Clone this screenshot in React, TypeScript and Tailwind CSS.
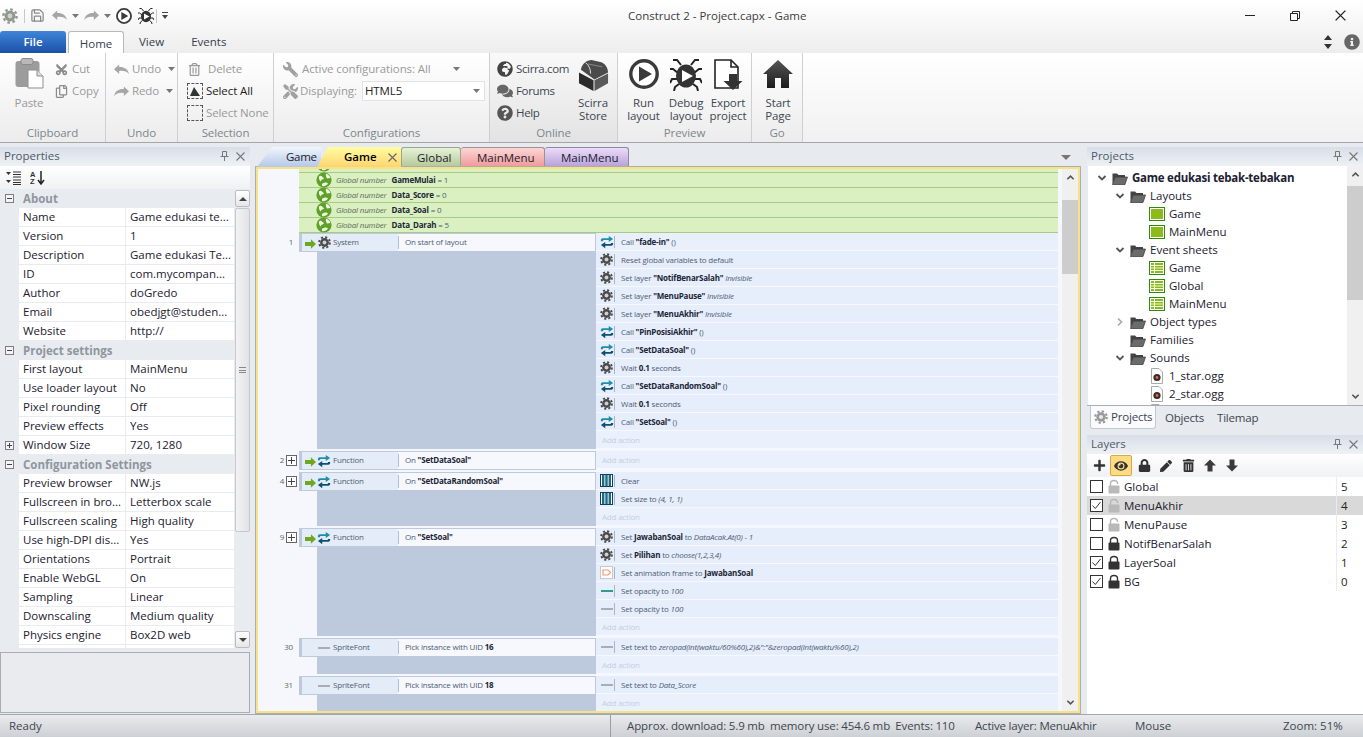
import type { ReactNode } from 'react'
import { FaTools, FaWrench, FaComments, FaQuestionCircle, FaInfoCircle, FaGlobeAfrica, FaRegTrashAlt, FaPlus, FaEye, FaLock, FaPen, FaTrashAlt, FaRegCopy, FaCut } from 'react-icons/fa'
import { LuSave } from 'react-icons/lu'

// ---- small drawings ----
function Gear({ s = 14, c = '#4a4a4a', mid = '#cfcfcf' }: { s?: number; c?: string; mid?: string }) {
  return (
    <svg width={s} height={s} viewBox="0 0 16 16" className="shrink-0">
      <circle cx="8" cy="8" r="6.6" fill="none" stroke={c} strokeWidth="2.4" strokeDasharray="2.6 2.58" />
      <circle cx="8" cy="8" r="5.4" fill={c} />
      <circle cx="8" cy="8" r="2.4" fill={mid} />
    </svg>
  )
}
function Fn() {
  return (
    <svg width="14" height="14" viewBox="0 0 16 16" className="shrink-0">
      <path d="M1 7V5.6C1 4.4 2 3.6 3 3.6H10V1L15 4.6 10 8V5.8H3.6V7Z" fill="#1f8fa8" />
      <path d="M15 9V10.4C15 11.6 14 12.4 13 12.4H6V15L1 11.4 6 8V10.2H12.4V9Z" fill="#0f4f72" />
    </svg>
  )
}
function GreenArrow() {
  return (
    <svg width="11" height="10" viewBox="0 0 13 11" className="shrink-0 mt-[5px] ml-[1px]">
      <path d="M0 3.2H7V0L13 5.5 7 11V7.8H0Z" fill="#6ea820" />
    </svg>
  )
}
function Globe() {
  return (
    <svg width="16" height="16" viewBox="0 0 16 16" className="shrink-0">
      <circle cx="8" cy="8" r="7.6" fill="#5fa02a" />
      <path d="M3 4.5C5 2.5 6.5 5 8 6.5 6.5 8 5 7 5 9.5 3.5 9 2.5 6.5 3 4.5ZM10 1.5C12 2 14 4 14.5 6L11 6.5C10 5 9.5 3 10 1.5ZM6 12C8 10.5 10.5 10 12 11.5 10.5 14 8 14.5 6 14Z" fill="#eef6e0" />
    </svg>
  )
}
function ArrayIcon() {
  return (
    <svg width="13" height="13" viewBox="0 0 13 13" className="shrink-0">
      <rect x="0.5" y="0.5" width="12" height="12" fill="#fff" stroke="#123f5a" />
      <path d="M2 1H4.4V12H2ZM5.3 1H7.7V12H5.3ZM8.6 1H11V12H8.6Z" fill="#1c6a85" />
    </svg>
  )
}
function AnimIcon() {
  return (
    <svg width="13" height="13" viewBox="0 0 13 13" className="shrink-0">
      <rect x="0.5" y="0.5" width="12" height="12" fill="#fff" stroke="#c9c9c9" />
      <path d="M3 4H8L10.5 6.5 8 9H3Z" fill="none" stroke="#ee9a70" strokeWidth="1.2" />
    </svg>
  )
}
function Dash({ c = '#a9aeb6' }: { c?: string }) {
  return <div className="w-[12px] h-[2px] shrink-0" style={{ backgroundColor: c }} />
}
function Chevron({ up, c = '#555', s = 9 }: { up?: boolean; c?: string; s?: number }) {
  return (
    <svg width={s} height={s} viewBox="0 0 10 10" className="shrink-0">
      <path d={up ? 'M1.5 7L5 3.5 8.5 7' : 'M1.5 3L5 6.5 8.5 3'} fill="none" stroke={c} strokeWidth="1.8" />
    </svg>
  )
}
function Caret({ c = '#777' }: { c?: string }) {
  return (
    <svg width="7" height="4" viewBox="0 0 7 4" className="shrink-0">
      <path d="M0 0H7L3.5 4Z" fill={c} />
    </svg>
  )
}
function UndoArrow({ flip, w = 15 }: { flip?: boolean; w?: number }) {
  return (
    <svg width={w} height={w * 0.7} viewBox="0 0 16 11" className={flip ? 'shrink-0 -scale-x-100' : 'shrink-0'}>
      <path d="M0 5.5L5.5 0.5V3.2C10.5 2.8 14.5 5 16 10.5 13.5 7.8 10 6.8 5.5 7.4V10.5Z" fill="#a6a6a6" />
    </svg>
  )
}
function PlayCircle({ s = 30 }: { s?: number }) {
  return (
    <svg width={s} height={s} viewBox="0 0 30 30" className="shrink-0">
      <circle cx="15" cy="15" r="13.2" fill="#fff" stroke="#3a3a3a" strokeWidth="3.4" />
      <path d="M10 7.5L23 15 10 22.5Z" fill="#3a3a3a" />
    </svg>
  )
}
function Bug({ s = 32 }: { s?: number }) {
  return (
    <svg width={s} height={s} viewBox="0 0 32 32" className="shrink-0">
      <g stroke="#222" strokeWidth="2" fill="none">
        <path d="M11 6L7 1H3M21 6L25 1H29M8 14L3 10H0M24 14L29 10H32M8 20L2 20 0 24M24 20L30 20 32 24M9 25L5 28 4 32M23 25L27 28 28 32" />
      </g>
      <ellipse cx="16" cy="17" rx="10" ry="11.5" fill="#333" />
      <path d="M12 11L23 17 12 23Z" fill="#fff" />
    </svg>
  )
}
function ExportIcon() {
  return (
    <svg width="30" height="32" viewBox="0 0 30 32" className="shrink-0">
      <path d="M2 1H18L25 8V29H2Z" fill="#fff" stroke="#222" strokeWidth="1.6" />
      <path d="M18 1V8H25" fill="none" stroke="#222" strokeWidth="1.6" />
      <path d="M16 15H24V22H29.5L20 31 10.5 22H16Z" fill="#333" />
    </svg>
  )
}
function House() {
  return (
    <svg width="30" height="30" viewBox="0 0 30 30" className="shrink-0">
      <defs>
        <linearGradient id="hs" x1="0" y1="0" x2="0" y2="1">
          <stop offset="0" stopColor="#555" />
          <stop offset="1" stopColor="#1c1c1c" />
        </linearGradient>
      </defs>
      <path d="M15 1L30 15H26V29H18V19H12V29H4V15H0Z" fill="url(#hs)" />
    </svg>
  )
}
function Chest() {
  return (
    <svg width="31" height="33" viewBox="0 0 32 34" className="shrink-0">
      <path d="M3 11C4 5 9 1 14 1L23 3C28 4 31 9 31 14L17 21Z" fill="#4b4b4b" />
      <path d="M8 4C11 6 13 10 13 15" stroke="#ddd" strokeWidth="1" fill="none" />
      <path d="M10 5L25 8" stroke="#8a8a8a" strokeWidth="1" />
      <path d="M1 14L16 22V33L1 25Z" fill="#2c2c2c" />
      <path d="M17 22L31 15V25L17 33Z" fill="#595959" />
    </svg>
  )
}
function Paste() {
  return (
    <svg width="29" height="31" viewBox="0 0 29 31" className="shrink-0">
      <rect x="0.5" y="3" width="24" height="26" rx="3" fill="#9c9c9c" />
      <rect x="6" y="0.5" width="12" height="6" rx="2" fill="#b9b9b9" stroke="#8a8a8a" />
      <path d="M13 12H22L28 18V30H13Z" fill="#fff" stroke="#8f8f8f" />
      <path d="M22 12V18H28" fill="#ddd" stroke="#8f8f8f" />
    </svg>
  )
}
function Pin({ c = '#777' }: { c?: string }) {
  return (
    <svg width="9" height="10" viewBox="0 0 9 10" className="shrink-0">
      <path d="M2.5 0.5H6.5V5.5H2.5ZM0.5 5.5H8.5M4.5 5.5V10" fill="none" stroke={c} />
    </svg>
  )
}
function CloseX({ c = '#777', s = 9 }: { c?: string; s?: number }) {
  return (
    <svg width={s} height={s} viewBox="0 0 9 9" className="shrink-0">
      <path d="M0.5 0.5L8.5 8.5M8.5 0.5L0.5 8.5" stroke={c} strokeWidth="1.1" />
    </svg>
  )
}
function Folder() {
  return (
    <svg width="16" height="13" viewBox="0 0 16 13" className="shrink-0">
      <path d="M0.5 12V1.5H5L6.5 3H13V5H3.5Z" fill="#444" />
      <path d="M0.5 12.5L3.5 5H15.5L13 12.5Z" fill="#6b6b6b" stroke="#333" strokeWidth="0.7" />
    </svg>
  )
}
function LayoutIcon() {
  return (
    <svg width="16" height="14" viewBox="0 0 16 14" className="shrink-0">
      <rect x="0.5" y="0.5" width="15" height="13" fill="#fff" stroke="#2f8a12" />
      <rect x="2" y="2" width="12" height="10" fill="#8cbb18" />
    </svg>
  )
}
function SheetIcon() {
  return (
    <svg width="16" height="14" viewBox="0 0 16 14" className="shrink-0">
      <rect x="0.5" y="0.5" width="15" height="13" fill="#fff" stroke="#2f8a12" />
      <path d="M2 2H14V12H2Z" fill="#8cbb18" />
      <path d="M2 4.5H14M2 7H14M2 9.5H14M5.5 2V12" stroke="#fff" strokeWidth="0.9" />
    </svg>
  )
}
function SoundIcon() {
  return (
    <svg width="12" height="16" viewBox="0 0 12 16" className="shrink-0">
      <path d="M0.5 0.5H8L11.5 4V15.5H0.5Z" fill="#fff" stroke="#aaa" />
      <circle cx="6" cy="9.5" r="3.6" fill="#3a2b2b" />
      <circle cx="6" cy="9.5" r="1.4" fill="#e86a3a" />
    </svg>
  )
}
function BlockArrow({ down }: { down?: boolean }) {
  return (
    <svg width="12" height="13" viewBox="0 0 12 13" className={down ? 'rotate-180' : ''}>
      <path d="M6 0.5L12 6.5H8.5V12.5H3.5V6.5H0Z" fill="#3a3a3a" />
    </svg>
  )
}
function DashedBox({ children }: { children?: ReactNode }) {
  return (
    <div className="w-[16px] h-[16px] border border-dashed border-[#555] flex items-center justify-center shrink-0">
      {children}
    </div>
  )
}

// ---- ribbon ----
function Group({ w, label, dark, children }: { w: string; label: string; dark?: boolean; children: ReactNode }) {
  return (
    <div className={`${w} shrink-0 flex flex-col border-r border-[#cfcfcf] bg-linear-to-b ${dark ? 'from-[#f9f9f9] to-[#e3e3e3]' : 'from-white to-[#ececec]'}`}>
      <div className="h-[71px] flex pt-[5px]">{children}</div>
      <div className="h-[18px] text-center text-[#7c8791] leading-[18px]">{label}</div>
    </div>
  )
}
function Small({ icon, label, dim = true, caret, className = '' }: { icon?: ReactNode; label: string; dim?: boolean; caret?: boolean; className?: string }) {
  return (
    <div className={`h-[22px] flex items-center gap-[3px] whitespace-nowrap ${dim ? 'text-[#9a9a9a]' : 'text-[#222]'} ${className}`}>
      {icon}
      <span>{label}</span>
      {caret && <span className="ml-[4px] flex"><Caret /></span>}
    </div>
  )
}
function Large({ w, icon, l1, l2 }: { w: string; icon: ReactNode; l1: string; l2: string }) {
  return (
    <div className={`${w} shrink-0 flex flex-col items-center`}>
      <div className="h-[38px] flex items-start justify-center pt-[1px]">{icon}</div>
      <div className="text-center leading-[13px] text-[#3d4650]">{l1}<br />{l2}</div>
    </div>
  )
}

function Ribbon() {
  return (
    <div className="h-[90px] shrink-0 flex border-b border-[#a6a6a6] bg-linear-to-b from-white to-[#f1f1f1] tracking-[-0.1px]">
      <Group w="w-[106px]" label="Clipboard">
        <div className="w-[55px] flex flex-col items-center shrink-0 pl-[3px]">
          <div className="h-[36px]"><Paste /></div>
          <div className="text-[#9a9a9a]">Paste</div>
        </div>
        <div className="flex flex-col">
          <Small icon={<FaCut size={13} color="#8b8b8b" className="-rotate-90 mr-[1px]" />} label="Cut" />
          <Small icon={<FaRegCopy size={13} color="#8b8b8b" className="mr-[1px]" />} label="Copy" />
        </div>
      </Group>
      <Group w="w-[72px]" label="Undo">
        <div className="flex flex-col pl-[8px]">
          <Small icon={<UndoArrow />} label="Undo" caret />
          <Small icon={<UndoArrow flip />} label="Redo" caret />
        </div>
      </Group>
      <Group w="w-[96px]" label="Selection">
        <div className="flex flex-col pl-[9px]">
          <Small icon={<FaRegTrashAlt size={13} color="#9a9a9a" className="mx-[1px] mr-[4px]" />} label="Delete" />
          <Small dim={false} icon={<DashedBox><svg width="12" height="12" viewBox="0 0 12 12"><path d="M1 11L5 2 11 11Z" fill="#333" /></svg></DashedBox>} label="Select All" />
          <Small icon={<DashedBox />} label="Select None" />
        </div>
      </Group>
      <Group w="w-[216px]" label="Configurations">
        <div className="flex flex-col pl-[9px]">
          <div className="h-[22px] flex items-center text-[#9a9a9a] whitespace-nowrap">
            <FaWrench size={15} color="#a0a0a0" className="mr-[4px] -scale-x-100" />
            <span>Active configurations: All</span>
            <span className="ml-[22px] flex"><Caret /></span>
          </div>
          <div className="h-[22px] flex items-center text-[#9a9a9a] whitespace-nowrap">
            <FaTools size={15} color="#a0a0a0" className="mr-[2px]" />
            <span>Displaying:</span>
            <div className="ml-[5px] w-[123px] h-[20px] border border-[#dfe3e8] bg-white text-[#222] flex items-center justify-between pl-[2px] pr-[4px]">
              HTML5 <Caret />
            </div>
          </div>
        </div>
      </Group>
      <Group w="w-[128px]" label="Online" dark>
        <div className="flex flex-col pl-[7px] w-[87px] shrink-0 tracking-[-0.35px]">
          <Small dim={false} className="text-[#3d4650]!" icon={<FaGlobeAfrica size={16} color="#444" />} label="Scirra.com" />
          <Small dim={false} className="text-[#3d4650]!" icon={<FaComments size={16} color="#666" />} label="Forums" />
          <Small dim={false} className="text-[#3d4650]!" icon={<FaQuestionCircle size={16} color="#555" />} label="Help" />
        </div>
        <Large w="w-[32px]" icon={<Chest />} l1="Scirra" l2="Store" />
      </Group>
      <Group w="w-[134px]" label="Preview">
        <div className="flex pl-[4px]">
          <Large w="w-[43px]" icon={<PlayCircle />} l1="Run" l2="layout" />
          <Large w="w-[42px]" icon={<Bug />} l1="Debug" l2="layout" />
          <Large w="w-[42px]" icon={<ExportIcon />} l1="Export" l2="project" />
        </div>
      </Group>
      <Group w="w-[51px]" label="Go">
        <div className="pl-[1px]"><Large w="w-[50px]" icon={<House />} l1="Start" l2="Page" /></div>
      </Group>
    </div>
  )
}

// ---- panels ----
function PanelHead({ title }: { title: string }) {
  return (
    <div className="h-[19px] shrink-0 flex items-center justify-between pl-[4px] pr-[5px] pb-px bg-linear-to-b from-[#d8dfe9] to-[#eef1f5] text-[#4f5a66]">
      <span>{title}</span>
      <span className="flex items-center gap-[7px]"><Pin /><CloseX /></span>
    </div>
  )
}

const PROP_SECTIONS: { title: string; rows: [string, string, boolean?][] }[] = [
  { title: 'About', rows: [['Name', 'Game edukasi te...'], ['Version', '1'], ['Description', 'Game edukasi Te...'], ['ID', 'com.mycompan...'], ['Author', 'doGredo'], ['Email', 'obedjgt@studen...'], ['Website', 'http://']] },
  { title: 'Project settings', rows: [['First layout', 'MainMenu'], ['Use loader layout', 'No'], ['Pixel rounding', 'Off'], ['Preview effects', 'Yes'], ['Window Size', '720, 1280', true]] },
  { title: 'Configuration Settings', rows: [['Preview browser', 'NW.js'], ['Fullscreen in bro...', 'Letterbox scale'], ['Fullscreen scaling', 'High quality'], ['Use high-DPI dis...', 'Yes'], ['Orientations', 'Portrait'], ['Enable WebGL', 'On'], ['Sampling', 'Linear'], ['Downscaling', 'Medium quality'], ['Physics engine', 'Box2D web']] },
]

function MiniBox({ plus }: { plus?: boolean }) {
  return (
    <svg width="9" height="9" viewBox="0 0 9 9" className="shrink-0">
      <rect x="0.5" y="0.5" width="8" height="8" fill="#f2f4f7" stroke="#7d7d7d" />
      <path d={plus ? 'M2 4.5H7M4.5 2V7' : 'M2 4.5H7'} stroke="#444" />
    </svg>
  )
}

function Properties() {
  return (
    <div className="w-[250px] shrink-0 flex flex-col">
      <PanelHead title="Properties" />
      <div className="h-[23px] shrink-0 bg-linear-to-b from-white to-[#eff1f3] flex items-center gap-[9px] pl-[6px]">
        <svg width="15" height="14" viewBox="0 0 15 14">
          <path d="M0 1H5L2.5 4ZM0 9H5L2.5 12Z" fill="#333" />
          <path d="M7 1H15M7 3.5H15M7 6H15M7 9H15M7 11.5H15M7 13.5H15" stroke="#333" />
        </svg>
        <svg width="15" height="15" viewBox="0 0 15 15">
          <text x="0" y="6.5" fontSize="7.5" fontWeight="700" fill="#333" fontFamily="Liberation Sans">A</text>
          <text x="0" y="14" fontSize="7.5" fontWeight="700" fill="#333" fontFamily="Liberation Sans">Z</text>
          <path d="M11 1V13M8 10L11 14 14 10" fill="none" stroke="#222" strokeWidth="1.5" />
        </svg>
      </div>
      <div className="h-[459px] shrink-0 flex bg-[#e8ebf0]">
        <div className="w-[234px] shrink-0 overflow-hidden">
          {PROP_SECTIONS.map(sec => (
            <div key={sec.title}>
              <div className="h-[19px] flex items-center pl-[5px] font-bold text-[#8f969e]">
                <MiniBox />
                <span className="ml-[9px]">{sec.title}</span>
              </div>
              {sec.rows.map(([k, v, plus]) => (
                <div key={k} className="h-[19px] flex border-b border-[#e8ebf0]">
                  <div className="w-[19px] shrink-0 flex items-center pl-[5px]">{plus && <MiniBox plus />}</div>
                  <div className="w-[107px] shrink-0 bg-white pl-[4px] leading-[18px] border-r border-[#e8ebf0] whitespace-nowrap overflow-hidden">{k}</div>
                  <div className="flex-1 bg-white pl-[4px] leading-[18px] whitespace-nowrap overflow-hidden">{v}</div>
                </div>
              ))}
            </div>
          ))}
          <div className="h-[3px] flex">
            <div className="w-[19px]" />
            <div className="w-[107px] bg-white border-r border-[#e8ebf0]" />
            <div className="flex-1 bg-white" />
          </div>
        </div>
        <div className="w-[15px] ml-[1px] flex flex-col pt-[1px]">
          <div className="h-[17px] shrink-0 rounded-[2px] border border-[#b9bdc3] bg-linear-to-b from-white to-[#e6e6e6] flex items-center justify-center">
            <svg width="8" height="4" viewBox="0 0 8 4"><path d="M0 4H8L4 0Z" fill="#444" /></svg>
          </div>
          <div className="h-[324px] shrink-0 mt-[1px] rounded-[2px] border border-[#c5c8cd] bg-linear-to-r from-[#f3f3f3] to-[#e1e3e6] flex items-center justify-center">
            <div className="w-[7px] h-[6px] border-y border-[#888] flex items-center"><div className="w-full h-px bg-[#888]" /></div>
          </div>
          <div className="flex-1" />
          <div className="h-[17px] shrink-0 rounded-[2px] border border-[#b9bdc3] bg-linear-to-b from-white to-[#e6e6e6] flex items-center justify-center">
            <svg width="8" height="4" viewBox="0 0 8 4"><path d="M0 0H8L4 4Z" fill="#444" /></svg>
          </div>
        </div>
      </div>
      <div className="h-[61px] mt-[4px] shrink-0 border border-[#a8adb4] bg-[#e9ebef]" />
    </div>
  )
}

// ---- event sheet ----
const B = ({ children }: { children: ReactNode }) => <b className="font-bold text-[#1c2636]">{children}</b>
const I = ({ children }: { children: ReactNode }) => <i className="italic">{children}</i>

type Action = { icon?: ReactNode; text: ReactNode; add?: boolean; lit?: boolean }
const ADD: Action = { text: 'Add action', add: true }
const gear = <Gear s={13} />
const fn = <Fn />
const dash = <Dash />

function ActionRow({ a }: { a: Action }) {
  if (a.add) {
    return <div className="h-[18px] bg-[#eaf0fc] border-b border-[#f5f8fe] flex items-center pl-[6px] text-[#c6cfdf]">Add action</div>
  }
  return (
    <div className={`h-[18px] flex items-center border-b border-[#f5f8fe] pl-[4px] ${a.lit ? 'bg-[#e9f0fc]' : 'bg-[#e6edfb]'}`}>
      <div className="w-[13px] flex items-center justify-center shrink-0">{a.icon}</div>
      <div className="w-px h-[12px] bg-[#aab5c6] ml-[1px] mr-[6px] shrink-0" />
      <div className="whitespace-nowrap">{a.text}</div>
    </div>
  )
}

function EventBlock({ num, plus, icons, arrow = true, obj, cond, actions, mt = 'mt-[2px]' }: { num: string; plus?: boolean; icons: ReactNode; arrow?: boolean; obj: string; cond: ReactNode; actions: Action[]; mt?: string }) {
  return (
    <div className={`flex ${mt}`} >
      <div className={`w-[41px] shrink-0 h-[18px] flex items-center justify-end text-[#666] ${plus ? 'pr-[2px]' : 'pr-[6px]'}`}>
        {num}
        {plus && (
          <svg width="11" height="11" viewBox="0 0 11 11" className="ml-[2px]">
            <rect x="0.5" y="0.5" width="10" height="10" fill="#fff" stroke="#666" />
            <path d="M2 5.5H9M5.5 2V9" stroke="#444" />
          </svg>
        )}
      </div>
      <div className="w-[297px] shrink-0 flex flex-col">
        <div className="h-[19px] -mb-px flex shrink-0 border border-l-[3px] border-[#bdcadd] bg-[#f6f8fe]">
          <div className="w-[96px] shrink-0 bg-[#e4ecf7] flex items-center pl-[2px] gap-[1px]">
            <span className="w-[12px] flex shrink-0 -mt-[3px]">{arrow && <GreenArrow />}</span>
            <span className="w-[14px] flex items-center justify-center shrink-0">{icons}</span>
            <span className="ml-[1px] -mt-px">{obj}</span>
          </div>
          <div className="flex-1 border-l border-[#b3c0d3] my-[2px] pl-[6px] flex items-center whitespace-nowrap">
            <span className="-mt-px">{cond}</span>
          </div>
        </div>
        <div className="flex-1 ml-[18px] bg-[#bdcadd]" />
      </div>
      <div className="w-[462px] shrink-0">
        {actions.map((a, i) => <ActionRow key={i} a={a} />)}
      </div>
    </div>
  )
}

const GLOBALS: [string, string][] = [['GameMulai', '1'], ['Data_Score', '0'], ['Data_Soal', '0'], ['Data_Darah', '5']]

function EventSheet() {
  return (
    <div className="flex-1 min-w-0 overflow-hidden bg-[#f5f7fc] text-[8px] tracking-[-0.2px] text-[#4f5d73] leading-none">
      <div className="h-[4px] ml-[41px] w-[759px] bg-[#daf0c0] border-b border-[#a9c98c] overflow-hidden flex items-end pl-[17px]">
        <span className="flex"><Globe /></span>
      </div>
      {GLOBALS.map(([n, v]) => (
        <div key={n} className="h-[15px] ml-[41px] w-[759px] bg-[#daf0c0] border-b border-[#a9c98c] flex items-center pl-[17px]">
          <Globe />
          <span className="ml-[4px] whitespace-nowrap">
            <span className="italic text-[#5c6b5c] mr-[5px]">Global number</span>
            <B>{n}</B> = {v}
          </span>
        </div>
      ))}
      <EventBlock
        mt="mt-0" num="1" icons={<Gear s={13} />} obj="System" cond="On start of layout"
        actions={[
          { icon: fn, text: <>Call <B>"fade-in"</B> ()</>, lit: true },
          { icon: gear, text: 'Reset global variables to default' },
          { icon: gear, text: <>Set layer <B>"NotifBenarSalah"</B> <I>Invisible</I></> },
          { icon: gear, text: <>Set layer <B>"MenuPause"</B> <I>Invisible</I></> },
          { icon: gear, text: <>Set layer <B>"MenuAkhir"</B> <I>Invisible</I></> },
          { icon: fn, text: <>Call <B>"PinPosisiAkhir"</B> ()</> },
          { icon: fn, text: <>Call <B>"SetDataSoal"</B> ()</> },
          { icon: gear, text: <>Wait <B>0.1</B> seconds</> },
          { icon: fn, text: <>Call <B>"SetDataRandomSoal"</B> ()</> },
          { icon: gear, text: <>Wait <B>0.1</B> seconds</> },
          { icon: fn, text: <>Call <B>"SetSoal"</B> ()</> },
          ADD,
        ]}
      />
      <EventBlock num="2" plus icons={<Fn />} obj="Function" cond={<>On <B>"SetDataSoal"</B></>} actions={[ADD]} />
      <EventBlock
        mt="mt-[3px]" num="4" plus icons={<Fn />} obj="Function" cond={<>On <B>"SetDataRandomSoal"</B></>}
        actions={[
          { icon: <ArrayIcon />, text: 'Clear' },
          { icon: <ArrayIcon />, text: <>Set size to <I>(4, 1, 1)</I></> },
          ADD,
        ]}
      />
      <EventBlock
        num="9" plus icons={<Fn />} obj="Function" cond={<>On <B>"SetSoal"</B></>}
        actions={[
          { icon: gear, text: <>Set <B>JawabanSoal</B> to <I>DataAcak.At(0) - 1</I></> },
          { icon: gear, text: <>Set <B>Pilihan</B> to <I>choose(1,2,3,4)</I></> },
          { icon: <AnimIcon />, text: <>Set animation frame to <B>JawabanSoal</B></> },
          { icon: <Dash c="#2f9c8c" />, text: <>Set opacity to <I>100</I></> },
          { icon: dash, text: <>Set opacity to <I>100</I></> },
          ADD,
        ]}
      />
      <EventBlock
        num="30" icons={dash} arrow={false} obj="SpriteFont" cond={<>Pick instance with UID <B>16</B></>}
        actions={[{ icon: dash, text: <>Set text to <I>zeropad(int(waktu/60%60),2)&":"&zeropad(int(waktu%60),2)</I></> }, ADD]}
      />
      <EventBlock
        num="31" icons={dash} arrow={false} obj="SpriteFont" cond={<>Pick instance with UID <B>18</B></>}
        actions={[{ icon: dash, text: <>Set text to <I>Data_Score</I></> }, ADD]}
      />
    </div>
  )
}

function DocTabs() {
  return (
    <div className="h-[20px] -mb-px shrink-0 flex items-stretch pl-[2px] text-[#1c2030] pr-[4px]">
      <div className="w-[64px] shrink-0 pl-[29px] leading-[19px] tracking-[-0.3px] bg-linear-to-b from-[#f0f6fd] to-[#b4c8e8] [clip-path:polygon(15px_0,100%_0,100%_100%,0_100%)]">Game</div>
      <div className="w-[84px] -ml-[4px] shrink-0 pl-[27px] font-semibold leading-[19px] bg-linear-to-b from-[#fffd9f] to-[#fdd473] flex items-start gap-[11px] text-black [clip-path:polygon(11px_0,100%_0,100%_100%,0_100%)]">
        Game
        <span className="mt-[6px]"><CloseX s={9} c="#666" /></span>
      </div>
      <div className="w-[60px] shrink-0 pl-[15px] leading-[19px] bg-linear-to-b from-[#e6f2d8] to-[#b4c898] border-t border-x border-[#9aa690] rounded-t-[3px]">Global</div>
      <div className="w-[84px] shrink-0 pl-[16px] leading-[19px] bg-linear-to-b from-[#fbd6d6] to-[#ee9898] border-t border-r border-[#a09090] rounded-t-[3px]">MainMenu</div>
      <div className="w-[84px] shrink-0 pl-[16px] leading-[19px] bg-linear-to-b from-[#ecdcf8] to-[#b6a0d8] border-t border-r border-[#9088a0] rounded-t-[3px]">MainMenu</div>
      <div className="flex-1 flex items-center justify-end pr-[6px]">
        <svg width="10" height="5" viewBox="0 0 10 5"><path d="M0 0H10L5 5Z" fill="#777" /></svg>
      </div>
    </div>
  )
}

function WinScroll({ thumbTop, thumbH }: { thumbTop: string; thumbH: string }) {
  return (
    <div className="w-[16px] shrink-0 bg-[#f0f0f0] flex flex-col items-center">
      <div className="h-[17px] flex items-center shrink-0"><Chevron up c="#555" /></div>
      <div className={`w-full flex-1 min-h-0 flex flex-col ${thumbTop}`}>
        <div className={`w-full bg-[#cdcdcd] ${thumbH}`} />
      </div>
      <div className="h-[17px] flex items-center shrink-0"><Chevron c="#555" /></div>
    </div>
  )
}

function Document() {
  return (
    <div className="w-[826px] shrink-0 ml-[5px] flex flex-col">
      <DocTabs />
      <div className="flex-1 min-h-0 border border-[#a9aeb5]">
        <div className="h-full border-2 border-[#f7e383] flex">
          <EventSheet />
          <div className="w-[2px] shrink-0 bg-[#f5f7fc]" />
          <WinScroll thumbTop="pt-[14px]" thumbH="h-[74px]" />
        </div>
      </div>
    </div>
  )
}

// ---- right side ----
type Node = { label: ReactNode; depth: number; icon: ReactNode; arrow?: 'open' | 'closed'; bold?: boolean }
const TREE: Node[] = [
  { label: 'Game edukasi tebak-tebakan', depth: 0, icon: <Folder />, arrow: 'open', bold: true },
  { label: 'Layouts', depth: 1, icon: <Folder />, arrow: 'open' },
  { label: 'Game', depth: 2, icon: <LayoutIcon /> },
  { label: 'MainMenu', depth: 2, icon: <LayoutIcon /> },
  { label: 'Event sheets', depth: 1, icon: <Folder />, arrow: 'open' },
  { label: 'Game', depth: 2, icon: <SheetIcon /> },
  { label: 'Global', depth: 2, icon: <SheetIcon /> },
  { label: 'MainMenu', depth: 2, icon: <SheetIcon /> },
  { label: 'Object types', depth: 1, icon: <Folder />, arrow: 'closed' },
  { label: 'Families', depth: 1, icon: <Folder /> },
  { label: 'Sounds', depth: 1, icon: <Folder />, arrow: 'open' },
  { label: '1_star.ogg', depth: 2, icon: <SoundIcon /> },
  { label: '2_star.ogg', depth: 2, icon: <SoundIcon /> },
  { label: '', depth: 2, icon: <SoundIcon /> },
]
const INDENT = ['pl-[9px]', 'pl-[27px]', 'pl-[46px]']

function TreeRow({ n }: { n: Node }) {
  return (
    <div className={`h-[18px] flex items-center whitespace-nowrap text-[#1c2030] ${INDENT[n.depth]}`}>
      <span className="w-[15px] shrink-0 flex">
        {n.arrow === 'open' && <Chevron s={10} c="#555" />}
        {n.arrow === 'closed' && (
          <svg width="10" height="10" viewBox="0 0 10 10"><path d="M3 1.5L6.5 5 3 8.5" fill="none" stroke="#a8a8a8" strokeWidth="1.6" /></svg>
        )}
      </span>
      <span className="w-[16px] shrink-0 flex justify-center">{n.icon}</span>
      <span className={`ml-[4px] ${n.bold ? 'font-bold tracking-[-0.25px]' : ''}`}>{n.label}</span>
    </div>
  )
}

const LAYERS: [string, boolean, boolean, string, boolean?][] = [
  ['Global', false, false, '5'],
  ['MenuAkhir', true, false, '4', true],
  ['MenuPause', false, false, '3'],
  ['NotifBenarSalah', false, true, '2'],
  ['LayerSoal', true, true, '1'],
  ['BG', true, true, '0'],
]

function LayerLock({ locked }: { locked: boolean }) {
  return (
    <svg width="12" height="15" viewBox="0 0 12 15" className="shrink-0">
      <path d={locked ? 'M2.5 7V4.5C2.5 0.5 9.5 0.5 9.5 4.5V7' : 'M2.5 7V4.5C2.5 0.5 9.5 0.5 9.5 4.5V5'} fill="none" stroke={locked ? '#333' : '#b5b5b5'} strokeWidth="1.4" />
      <rect x="0.5" y="6.5" width="11" height="8" rx="1" fill={locked ? '#333' : '#b9b9b9'} />
    </svg>
  )
}

function Right() {
  return (
    <div className="w-[276px] shrink-0 ml-[6px] flex flex-col">
      <PanelHead title="Projects" />
      <div className="h-[240px] shrink-0 border-b border-[#a9aeb5] flex pl-px bg-[#e8ebf0]">
        <div className="flex-1 min-w-0 bg-white overflow-hidden pt-[3px]">
          {TREE.map((n, i) => <TreeRow key={i} n={n} />)}
        </div>
        <WinScroll thumbTop="pt-[3px]" thumbH="h-[114px]" />
      </div>
      <div className="h-[24px] shrink-0 flex items-start text-[#3d4650] tracking-[-0.2px]">
        <div className="ml-[3px] h-[23px] w-[66px] bg-[#fafbfc] border border-t-0 border-[#c4c8ce] rounded-b-[3px] flex items-center pl-[3px] gap-[3px]">
          <Gear s={14} c="#9a9a9a" mid="#e8e8e8" /> Projects
        </div>
        <div className="ml-[9px] leading-[23px]">Objects</div>
        <div className="ml-[13px] leading-[23px]">Tilemap</div>
      </div>
      <div className="mt-[5px]"><PanelHead title="Layers" /></div>
      <div className="h-[23px] shrink-0 bg-linear-to-b from-white to-[#f0f1f3] flex items-center pl-[6px] text-[#333]">
        <span className="w-[13px] flex justify-center"><FaPlus size={13} /></span>
        <span className="ml-[4px] w-[22px] h-[21px] bg-[#fddc84] border border-[#d6a84a] rounded-[2px] flex items-center justify-center"><FaEye size={14} /></span>
        <span className="ml-[4px] w-[16px] flex justify-center"><FaLock size={13} /></span>
        <span className="ml-[6px] w-[16px] flex justify-center"><FaPen size={12} /></span>
        <span className="ml-[6px] w-[16px] flex justify-center"><FaTrashAlt size={13} /></span>
        <span className="ml-[6px] w-[16px] flex justify-center"><BlockArrow /></span>
        <span className="ml-[6px] w-[16px] flex justify-center"><BlockArrow down /></span>
      </div>
      <div className="flex-1 min-h-0 bg-white flex">
        <div className="flex-1 min-w-0">
          {LAYERS.map(([name, checked, locked, idx, sel]) => (
            <div key={name} className={`h-[19px] flex items-center ${sel ? 'bg-[#d9d9d9]' : ''}`}>
              <div className="ml-[3px] w-[13px] h-[13px] border border-[#333] bg-white flex items-center justify-center shrink-0">
                {checked && <svg width="9" height="9" viewBox="0 0 9 9"><path d="M0.5 4.5L3.3 7.5 8.5 1" fill="none" stroke="#333" strokeWidth="1" /></svg>}
              </div>
              <span className="ml-[5px] flex"><LayerLock locked={locked} /></span>
              <span className="ml-[4px] flex-1 text-[#1c2030]">{name}</span>
              <span className="w-[27px] shrink-0 h-full border-l border-[#e8ebf2] pl-[4px] leading-[19px] text-[#222]">{idx}</span>
            </div>
          ))}
        </div>
      </div>
    </div>
  )
}

export default function App() {
  return (
    <div className="w-[1363px] h-[737px] overflow-hidden flex flex-col bg-[#e7eaee] text-[11.5px] text-[#1c2030] font-['Open_Sans',sans-serif]">
      {/* title + tabs */}
      <div className="h-[53px] shrink-0 bg-linear-to-b from-white via-[#f6f6f6] to-[#ededed] flex flex-col">
        <div className="h-[31px] shrink-0 flex items-center">
          <div className="flex items-center pl-[2px] w-[300px]">
            <Gear s={16} c="#8f9a8f" mid="#d0d4d0" />
            <div className="w-px h-[14px] bg-[#c8c8c8] ml-[6px] mr-[5px]" />
            <LuSave size={15} color="#888" />
            <span className="ml-[7px] flex items-center gap-[5px]"><UndoArrow w={15} /><Caret /></span>
            <span className="ml-[5px] flex items-center gap-[5px]"><UndoArrow w={15} flip /><Caret /></span>
            <span className="ml-[5px]"><PlayCircle s={16} /></span>
            <span className="ml-[6px]"><Bug s={16} /></span>
            <div className="w-px h-[14px] bg-[#c8c8c8] ml-[2px] mr-[5px]" />
            <svg width="6" height="8" viewBox="0 0 6 8"><path d="M0 0H6V1H0ZM0 3H6L3 7Z" fill="#444" /></svg>
          </div>
          <div className="flex-1 pl-[328px] text-[#3d3d3d] whitespace-nowrap">Construct 2 - Project.capx - Game</div>
          <div className="flex items-center text-[#222] pr-[17px] gap-[35px]">
            <div className="w-[10px] h-px bg-[#222]" />
            <svg width="10" height="10" viewBox="0 0 10 10"><path d="M2.5 2.5V0.5H9.5V7.5H7.5M0.5 2.5H7.5V9.5H0.5Z" fill="none" stroke="#222" /></svg>
            <CloseX c="#222" s={11} />
          </div>
        </div>
        <div className="flex-1 flex items-end border-b border-[#b9b9b9]">
          <div className="w-[66px] h-[22px] ml-0 bg-linear-to-b from-[#3f86d8] to-[#1c50a8] rounded-t-[3px] text-white text-center leading-[21px] font-semibold">File</div>
          <div className="w-[56px] h-[23px] -mb-px ml-[2px] bg-white border border-b-0 border-[#b9b9b9] rounded-t-[3px] text-center leading-[23px] text-[#33404d]">Home</div>
          <div className="ml-[15px] leading-[22px] text-[#33404d]">View</div>
          <div className="ml-[27px] leading-[22px] text-[#33404d]">Events</div>
          <div className="flex-1" />
          <div className="flex items-center gap-[11px] pr-[3px] pb-[3px]">
            <svg width="10" height="14" viewBox="0 0 10 14"><path d="M5 0L9 5H1ZM1 9H9L5 14Z" fill="#333" /></svg>
            <FaInfoCircle size={16} color="#666" />
          </div>
        </div>
      </div>
      <Ribbon />
      <div className="flex-1 min-h-0 flex pt-[4px]">
        <Properties />
        <Document />
        <Right />
      </div>
      {/* status bar */}
      <div className="h-[23px] shrink-0 border-t border-[#a3a7ad] bg-linear-to-b from-[#e9ebee] to-[#cdd0d4] flex items-center text-[#3d4650] whitespace-nowrap">
        <span className="w-[611px] shrink-0 pl-[9px] border-r border-[#9a9ea4] h-full leading-[22px]">Ready</span>
        <span className="w-[348px] shrink-0 pl-[16px] tracking-[-0.1px] [word-spacing:-0.3px]">Approx. download: 5.9 mb &nbsp;memory use: 454.6 mb &nbsp;Events: 110</span>
        <span className="w-[176px] shrink-0 pl-[16px] tracking-[-0.2px]">Active layer: MenuAkhir</span>
        <span className="w-[148px] shrink-0">Mouse</span>
        <span>Zoom: 51%</span>
      </div>
    </div>
  )
}
